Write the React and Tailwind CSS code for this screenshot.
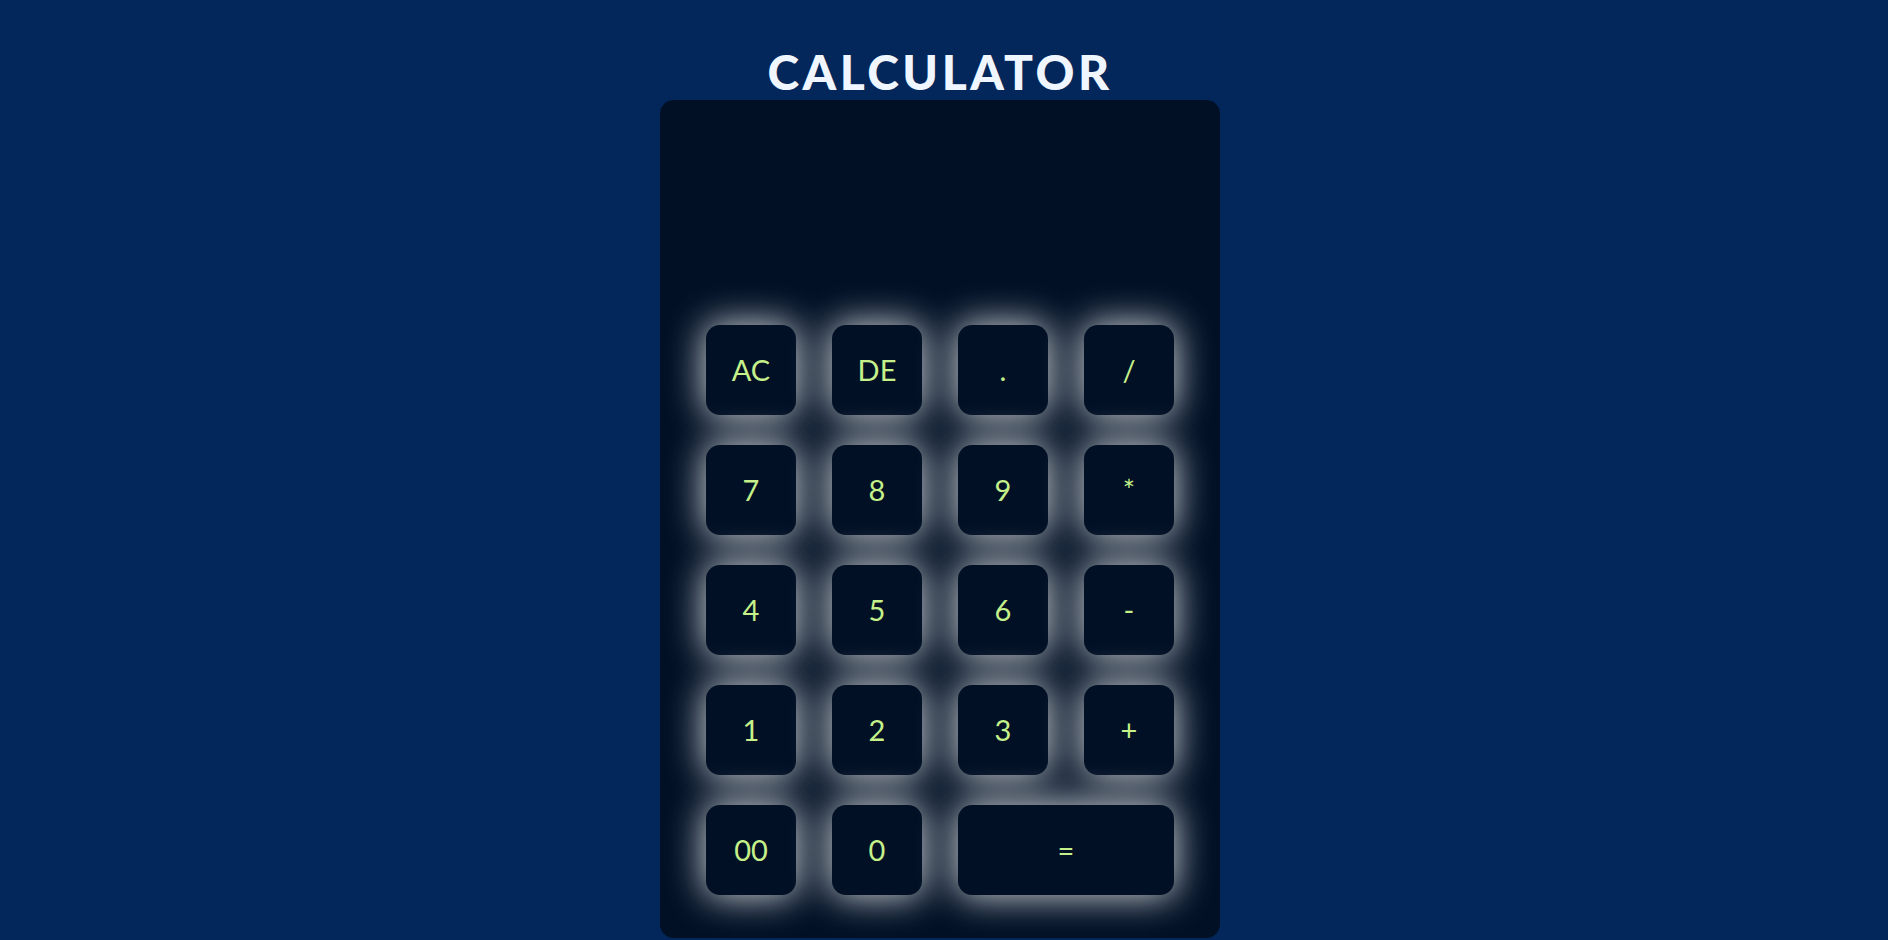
import React, { useState } from 'react';

const KEYS = [
  'AC', 'DE', '.', '/',
  '7', '8', '9', '*',
  '4', '5', '6', '-',
  '1', '2', '3', '+',
  '00', '0', '=',
];

export default function App() {
  const [value, setValue] = useState('');

  const press = (key) => {
    if (key === 'AC') return setValue('');
    if (key === 'DE') return setValue((v) => v.slice(0, -1));
    if (key === '=') {
      try {
        // eslint-disable-next-line no-new-func
        setValue(String(Function(`return (${value || 0})`)()));
      } catch (e) {
        setValue('Error');
      }
      return;
    }
    setValue((v) => v + key);
  };

  return (
    <div className="min-h-screen w-full bg-[#03265b] flex flex-col items-center pr-[8px] font-['Lato',sans-serif]">
      <h1 className="mt-[44px] text-[48px] leading-[56px] font-black tracking-[3.5px] text-[#f0f6ff]">
        CALCULATOR
      </h1>
      <div className="w-[560px] h-[838px] rounded-[14px] bg-[#011025] flex flex-col">
        <div className="h-[225px] flex items-end justify-end px-[48px] pb-[40px] text-[44px] text-[#c5f08a] overflow-hidden">
          {value}
        </div>
        <div className="grid grid-cols-[repeat(4,90px)] gap-x-[36px] gap-y-[30px] justify-center">
          {KEYS.map((key) => (
            <button
              key={key}
              onClick={() => press(key)}
              className={`${key === '=' ? 'col-span-2' : ''} h-[90px] rounded-[14px] bg-[#011025] text-[#c5f08a] text-[29px] shadow-[0_0_36px_2px_rgba(255,255,255,0.8)] flex items-center justify-center cursor-pointer`}
            >
              {key}
            </button>
          ))}
        </div>
      </div>
    </div>
  );
}
